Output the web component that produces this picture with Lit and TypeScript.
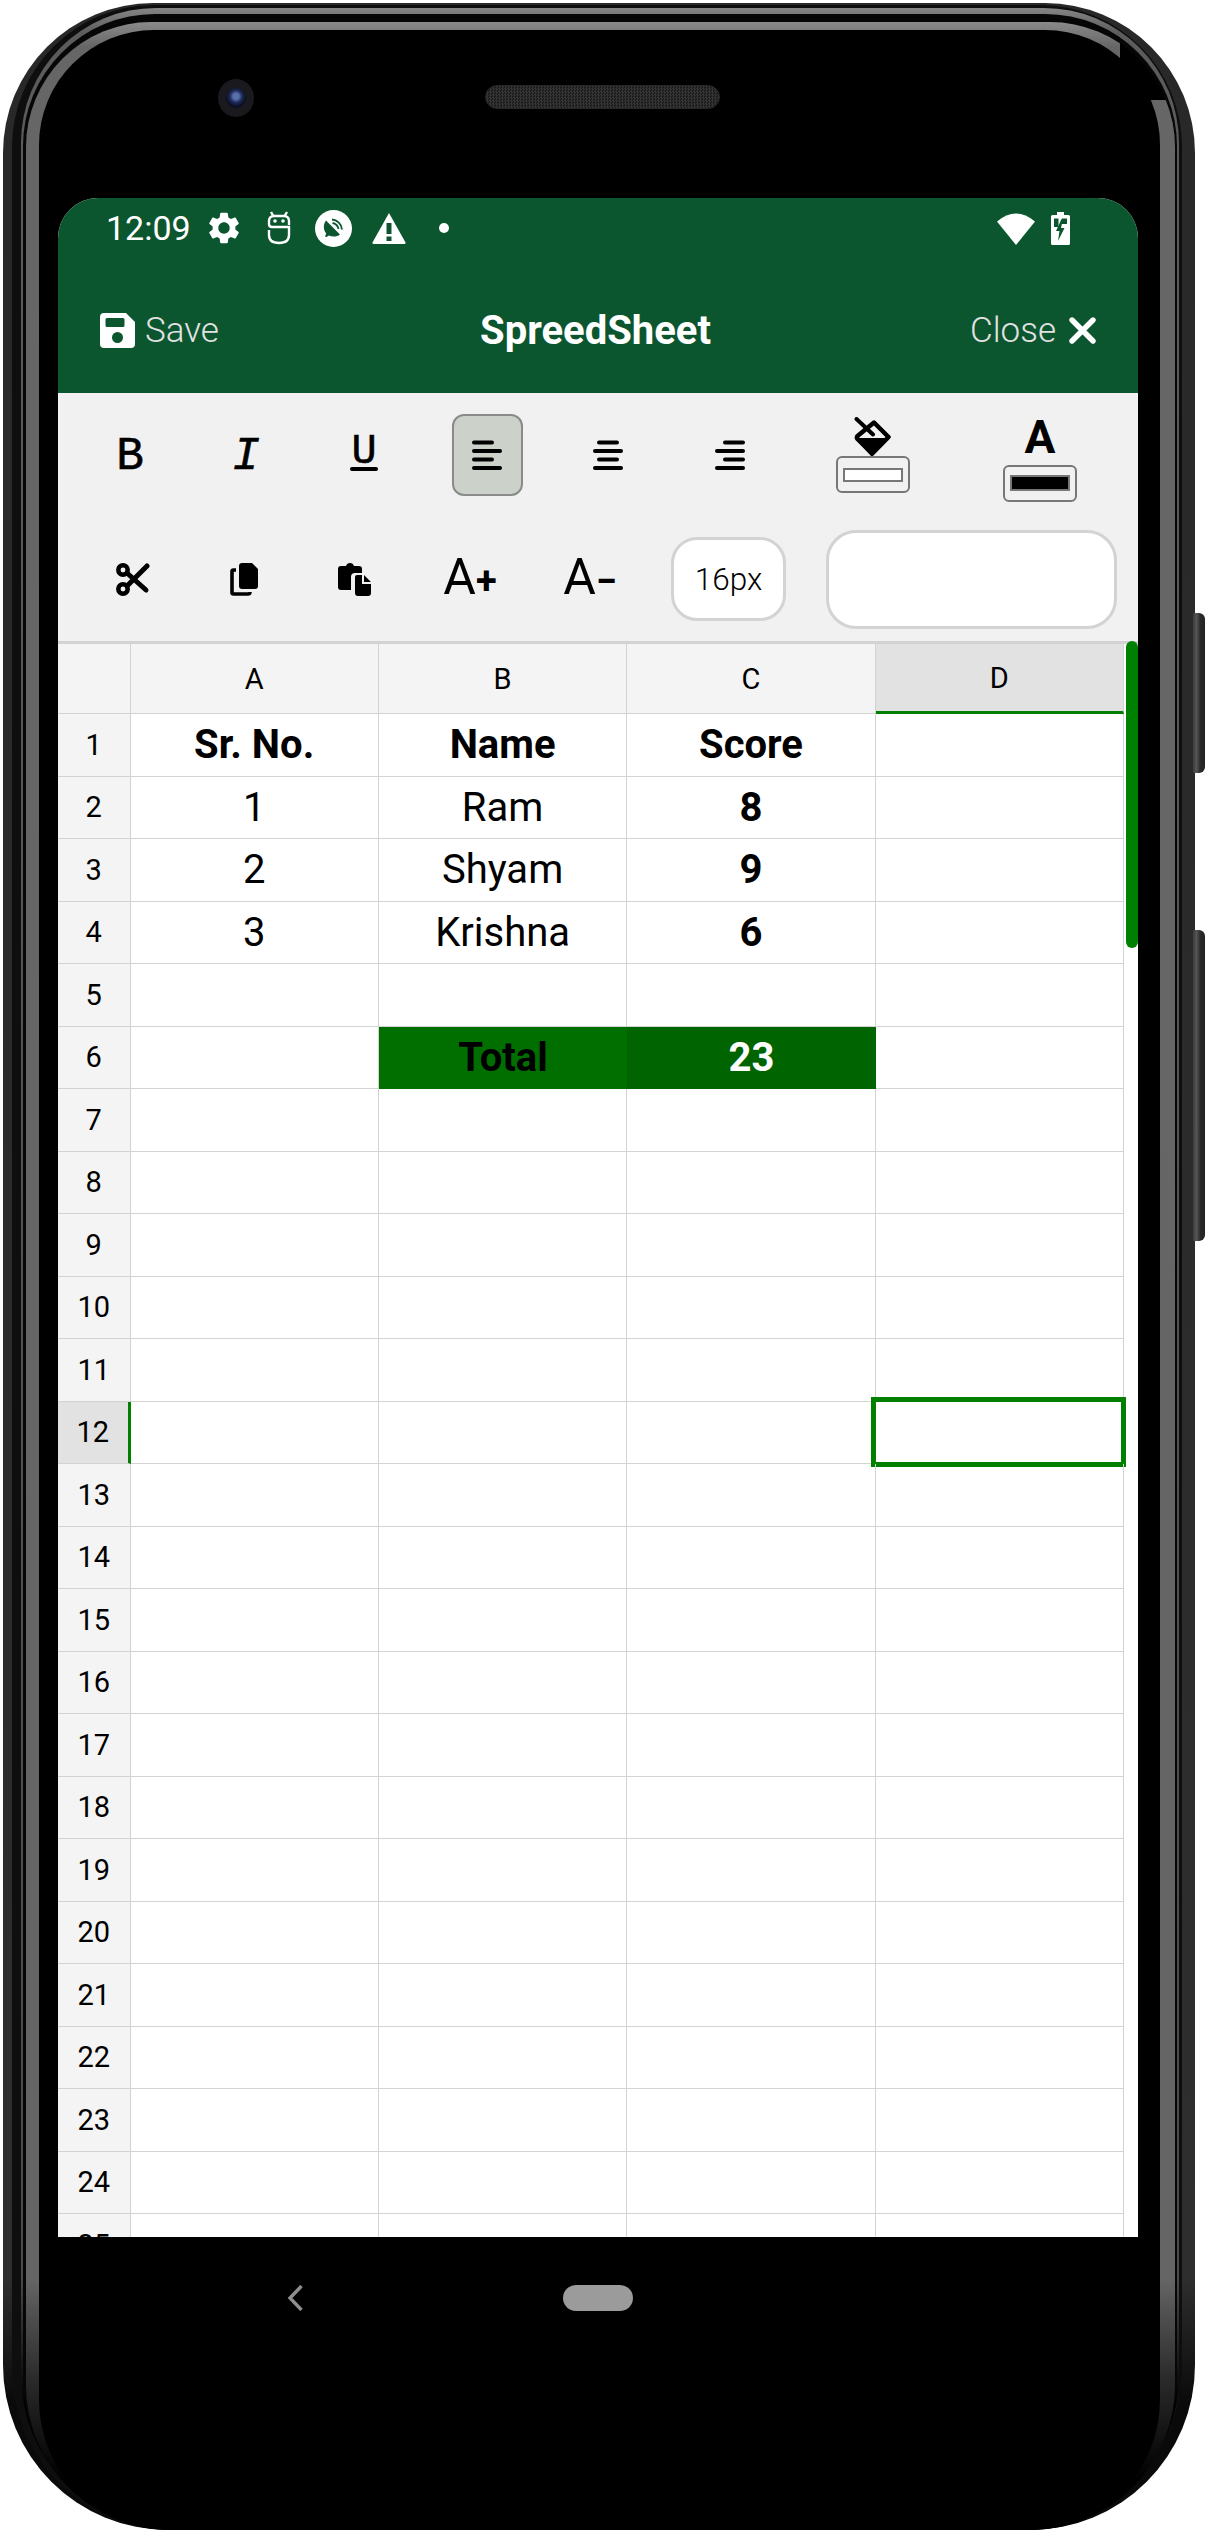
import { LitElement, html, css, svg } from "lit";
import { customElement } from "lit/decorators.js";

type Cell = { text?: string; cls?: string };

const COLS = ["A", "B", "C", "D"];

// only the rows that hold something, the rest of the sheet is blank
const DATA: Record<number, Cell[]> = {
  1: [{ text: "Sr. No.", cls: "bold" }, { text: "Name", cls: "bold" }, { text: "Score", cls: "bold" }, {}],
  2: [{ text: "1" }, { text: "Ram" }, { text: "8", cls: "bold" }, {}],
  3: [{ text: "2" }, { text: "Shyam" }, { text: "9", cls: "bold" }, {}],
  4: [{ text: "3" }, { text: "Krishna" }, { text: "6", cls: "bold" }, {}],
  6: [{}, { text: "Total", cls: "bold total-b" }, { text: "23", cls: "bold total-c" }, {}],
  12: [{}, {}, {}, { cls: "selected" }],
};

const gear = svg`<path d="M19.14 12.94c.04-.3.06-.61.06-.94 0-.32-.02-.64-.07-.94l2.03-1.58c.18-.14.23-.41.12-.61l-1.92-3.32c-.12-.22-.37-.29-.59-.22l-2.39.96c-.5-.38-1.03-.7-1.62-.94l-.36-2.54c-.04-.24-.24-.41-.48-.41h-3.84c-.24 0-.43.17-.47.41l-.36 2.54c-.59.24-1.13.57-1.62.94l-2.39-.96c-.22-.08-.47 0-.59.22L2.74 8.87c-.12.21-.08.47.12.61l2.03 1.58c-.05.3-.09.63-.09.94s.02.64.07.94l-2.03 1.58c-.18.14-.23.41-.12.61l1.92 3.32c.12.22.37.29.59.22l2.39-.96c.5.38 1.03.7 1.62.94l.36 2.54c.05.24.24.41.48.41h3.84c.24 0 .44-.17.47-.41l.36-2.54c.59-.24 1.13-.56 1.62-.94l2.39.96c.22.08.47 0 .59-.22l1.92-3.32c.12-.22.07-.47-.12-.61l-2.01-1.58zM12 15.6c-1.98 0-3.6-1.62-3.6-3.6s1.62-3.6 3.6-3.6 3.6 1.62 3.6 3.6-1.62 3.6-3.6 3.6z"/>`;

function bars(lines: [number, number][]) {
  return html`<svg class="bars" width="30" height="30" viewBox="0 0 30 30" fill="none" stroke="#000" stroke-width="4" stroke-linecap="round">
    ${lines.map((l, i) => svg`<line x1=${l[0]} x2=${l[1]} y1=${2.5 + i * 8.5} y2=${2.5 + i * 8.5} />`)}
  </svg>`;
}

@customElement("app-root")
export class AppRoot extends LitElement {
  static styles = css`
    :host {
      display: block;
      width: 1206px;
      height: 2533px;
      background: #fff;
      font-family: Roboto, "Liberation Sans", sans-serif;
      color: #000;
    }
    * { box-sizing: border-box; }

    /* phone shell, one nested ring per band of the frame */
    .device {
      position: relative;
      display: flex;
      width: 1192px;
      height: 2527px;
      margin: 3px 0 0 3px;
      padding: 2px 13px 0 9px;
      background: linear-gradient(#282828 0, #2e2e2e 90%, #0a0a0a 95%);
      border-radius: 150px 150px 165px 165px;
    }
    .ring1, .ring2, .ring3, .ring4, .bezel {
      display: flex;
      flex: 1;
      min-width: 0;
    }
    .ring1 {
      padding: 3px 3px 0 9px;
      background: #0e0e0e;
      border-radius: 142px 142px 160px 160px;
    }
    .ring2 {
      padding: 6px 2px 0 2px;
      background: linear-gradient(#858585 0, #5c5c5c 1%, #4a4a4a 90%, #000 95%);
      border-radius: 135px 135px 155px 155px;
    }
    .ring3 {
      padding: 8px 2px 0 3px;
      background: #060606;
      border-radius: 132px 132px 152px 152px;
    }
    .ring4 {
      padding: 8px 15px 0 13px;
      background:
        linear-gradient(#000, #000) right top / 55px 78px no-repeat,
        linear-gradient(#8a8a8a 0, #666 1%, #656565 90%, #2a2a2a 94%, #000 98%);
      border-radius: 125px 125px 145px 145px;
    }
    .bezel {
      flex-direction: column;
      background: #000;
      border-radius: 115px 115px 130px 130px;
    }
    .side-btn {
      position: absolute;
      left: 1190px;
      width: 12px;
      background: linear-gradient(90deg, #3c3c3c, #555 30%, #2a2a2a 60%, #222);
      border-radius: 0 6px 6px 0;
    }
    .side-btn.power { top: 610px; height: 160px; }
    .side-btn.volume { top: 927px; height: 311px; }

    .top-bezel {
      display: flex;
      align-items: flex-start;
      flex: none;
      height: 168px;
      padding: 49px 0 0 179px;
    }
    .camera {
      flex: none;
      display: flex;
      align-items: center;
      justify-content: center;
      width: 36px;
      height: 38px;
      border-radius: 50%;
      background: #1a1a1e;
    }
    .camera i {
      width: 20px;
      height: 20px;
      border-radius: 50%;
      background: radial-gradient(circle at 50% 42%, #5a6ea8 0 3px, #1f2c5c 6px, #0b0f22 10px);
    }
    .speaker {
      flex: none;
      width: 235px;
      height: 24px;
      margin: 6px 0 0 231px;
      border-radius: 12px;
      border: 1px solid #262626;
      background: repeating-conic-gradient(#343434 0 25%, #1c1c1c 0 50%) 0 0 / 3px 3px;
    }

    .screen {
      display: flex;
      flex-direction: column;
      flex: none;
      height: 2039px;
      margin: 0 22px 0 19px;
      border-radius: 40px 40px 0 0;
      overflow: hidden;
      background: #fff;
      position: relative;
    }

    .nav {
      display: flex;
      align-items: flex-start;
      flex: none;
      padding: 48px 0 0 248px;
    }
    .pill {
      width: 70px;
      height: 26px;
      margin-left: 260px;
      border-radius: 13px;
      background: #9b9b9b;
    }

    /* header */
    .appbar {
      flex: none;
      height: 195px;
      background: #0c562f;
      color: #fff;
    }
    .status {
      display: flex;
      align-items: center;
      height: 60px;
      padding: 0 0 0 48px;
    }
    .time {
      width: 85px;
      font-size: 34px;
      font-weight: 400;
      line-height: 60px;
    }
    .status svg { flex: none; fill: #fff; }
    .status .gear { margin-left: 14px; }
    .status .robot { margin-left: 23px; fill: none; }
    .status .dish { margin-left: 23px; }
    .status .warn { margin-left: 20px; }
    .status .dot {
      width: 10px;
      height: 10px;
      margin-left: 33px;
      border-radius: 50%;
      background: #fff;
    }
    .status .wifi { margin-left: auto; }
    .status .batt { margin: 0 68px 0 16px; }

    .actions {
      display: grid;
      grid-template-columns: 1fr auto 1fr;
      align-items: center;
      height: 135px;
      padding: 10px 42px 0;
    }
    .action {
      display: flex;
      align-items: center;
      gap: 10px;
      font-size: 35px;
      font-weight: 300;
      color: #e2e2e2;
    }
    .action.right { justify-content: flex-end; gap: 13px; }
    .title {
      margin-left: -5px;
      font-size: 40px;
      font-weight: 700;
      color: #fff;
    }

    /* toolbar */
    .toolbar {
      flex: none;
      height: 248px;
      padding-left: 14px;
      background: #f1f1f1;
    }
    .tools {
      display: grid;
      align-items: center;
      justify-items: center;
      height: 124px;
    }
    .tools.one { grid-template-columns: 116px 116px 120px 126px 116px 128px 158px 176px; }
    .tools.two {
      grid-template-columns: 122px 100px 120px 112px 128px 149px 335px;
    }
    .mono {
      margin-top: 3px;
      font-family: "Liberation Mono", monospace;
      font-weight: 400;
      font-size: 46px;
      line-height: 30px;
      -webkit-text-stroke: 0.6px #000;
    }
    .mono.ital { font-style: italic; }
    .mono.under {
      display: flex;
      flex-direction: column;
      align-items: center;
      margin-top: 0;
      font-size: 42px;
      line-height: 24px;
    }
    .mono.under::after {
      content: "";
      width: 28px;
      height: 4px;
      margin-top: 3px;
      background: #000;
      border-radius: 2px;
    }
    .active {
      display: flex;
      align-items: center;
      justify-content: center;
      width: 71px;
      height: 82px;
      background: #ccd1ca;
      border: 2px solid #8a8a8a;
      border-radius: 12px;
    }
    .swatch {
      display: flex;
      flex-direction: column;
      align-items: center;
    }
    .swatch.ink { margin-top: 10px; }
    .swatch .letter {
      font-size: 46px;
      font-weight: 700;
      line-height: 36px;
      height: 46px;
    }
    .swatch .box {
      display: flex;
      align-items: center;
      justify-content: center;
      width: 74px;
      height: 37px;
      border: 2px solid #777;
      border-radius: 6px;
    }
    .swatch .box i {
      width: 60px;
      height: 14px;
      border: 2px solid #777;
      background: #fff;
    }
    .swatch.ink .box i { height: 16px; background: #000; }
    .bump {
      font-size: 50px;
      font-weight: 450;
      line-height: 50px;
    }
    .bump span { font-size: 38px; font-weight: 700; }
    .size {
      display: flex;
      align-items: center;
      justify-content: center;
      width: 115px;
      height: 84px;
      background: #fff;
      border: 3px solid #d3d3d3;
      border-radius: 26px;
      font-size: 31.5px;
      font-weight: 350;
    }
    .search {
      justify-self: start;
      width: 291px;
      height: 99px;
      margin-left: 23px;
      background: #fff;
      border: 3px solid #d3d3d3;
      border-radius: 30px;
    }

    /* sheet */
    .sheet {
      display: grid;
      flex: none;
      grid-template-columns: 72.5px repeat(4, 248.4px);
      grid-template-rows: 70px;
      grid-auto-rows: 62.5px;
      border-top: 3px solid #d3d3d3;
    }
    .sheet > div {
      display: flex;
      align-items: center;
      justify-content: center;
      position: relative;
      border-right: 1px solid #d3d3d3;
      border-bottom: 1px solid #d3d3d3;
      font-size: 40px;
      white-space: nowrap;
    }
    .sheet > .head {
      background: #f4f4f4;
      font-size: 29px;
      font-weight: 400;
    }
    .sheet > .head.on-col {
      background: #e2e2e2;
      border-bottom: 3px solid #007f00;
    }
    .sheet > .head.on-row {
      background: #e2e2e2;
      border-right: 3px solid #007f00;
    }
    .sheet > .bold { font-weight: 700; }
    .sheet > .total-b { background: #006f00; border: none; }
    .sheet > .total-c { background: #006400; color: #fff; border: none; }
    .sheet > .selected::after {
      content: "";
      position: absolute;
      inset: -5px -3px -4px -5px;
      border: 5px solid #007f00;
    }
    .scrollbar {
      position: absolute;
      right: 0;
      top: 443px;
      width: 12px;
      height: 307px;
      border-radius: 6px;
      background: #008000;
    }
  `;

  render() {
    const rows = Array.from({ length: 25 }, (_, i) => i + 1);
    return html`
      <div class="device">
        <div class="side-btn power"></div>
        <div class="side-btn volume"></div>
        <div class="ring1"><div class="ring2"><div class="ring3"><div class="ring4">
          <div class="bezel">
            <div class="top-bezel">
              <div class="camera"><i></i></div>
              <div class="speaker"></div>
            </div>
            <div class="screen">
              ${this.renderAppbar()}
              ${this.renderToolbar()}
              <div class="sheet">
                <div class="head"></div>
                ${COLS.map((c) => html`<div class="head ${c === "D" ? "on-col" : ""}">${c}</div>`)}
                ${rows.map(
                  (r) => html`
                    <div class="head row ${r === 12 ? "on-row" : ""}">${r}</div>
                    ${(DATA[r] ?? [{}, {}, {}, {}]).map((cell) => html`<div class=${cell.cls ?? ""}>${cell.text ?? ""}</div>`)}
                  `
                )}
              </div>
              <div class="scrollbar"></div>
            </div>
            <div class="nav">
              <svg width="16" height="26" viewBox="0 0 16 26" fill="none" stroke="#8e8e8e" stroke-width="3.4">
                <path d="M14.5 1 3 13l11.5 12" />
              </svg>
              <div class="pill"></div>
            </div>
          </div>
        </div></div></div></div>
      </div>
    `;
  }

  renderAppbar() {
    return html`
      <div class="appbar">
        <div class="status">
          <span class="time">12:09</span>
          <svg class="gear" width="38" height="38" viewBox="0 0 24 24">${gear}</svg>
          <svg class="robot" width="26" height="34" viewBox="0 0 26 34" stroke="#fff" stroke-width="2.4">
            <path d="M5 1l2.4 4M21 1l-2.400 4" />
            <path d="M23 14v-4q0-5-5-5H8q-5 0-5 5v3q0 3 3 3h17v8q0 8-10 8T3 24v-5" />
            <circle cx="9" cy="10" r="1.8" fill="#fff" stroke="none" />
            <circle cx="17" cy="10" r="1.8" fill="#fff" stroke="none" />
          </svg>
          <svg class="dish" width="37" height="37" viewBox="0 0 37 37">
            <circle cx="18.5" cy="18.5" r="18.5" />
            <path d="M11 10.500 25 24.500c-3 2.500-8 2.500-11 1l-2.500 1.500-1.500-.5 1.200-3c-3-3.500-3.200-9-.2-13z" fill="#0c562f" />
            <path d="M17 9.500c5 .3 9.800 4.800 10 10M17.500 13c3 .3 5.800 3 6 6" fill="none" stroke="#0c562f" stroke-width="1.8" />
          </svg>
          <svg class="warn" width="34" height="31" viewBox="0 0 34 31">
            <path d="M17 0 33.500 29.500q.3 1.500-1 1.500H1.500q-1.300 0-1-1.500z" />
            <path d="M14.500 10h5v11h-5zM14.500 23.500h5V28h-5z" fill="#0c562f" />
          </svg>
          <span class="dot"></span>
          <svg class="wifi" width="38" height="33" viewBox="0 0 38 33">
            <path d="M0 9.500Q19-6.500 38 9.500L19 33z" />
          </svg>
          <svg class="batt" width="19" height="33" viewBox="0 0 19 33">
            <path d="M6 0h7v3h4.500q1.500 0 1.500 1.500v27q0 1.500-1.500 1.500h-16Q0 33 0 31.500v-27Q0 3 1.500 3H6z" />
            <path d="M3 6.500h4.500V15H3zM11 6.500h5V12h-5z" fill="#0c562f" />
            <path d="M10.500 7 5 19h3.500L7 29l6.500-13H10l2-9z" fill="#0c562f" />
          </svg>
        </div>
        <div class="actions">
          <div class="action">
            <svg width="35" height="35" viewBox="0 0 35 35" fill="#fff">
              <path fill-rule="evenodd" d="M4 0h22l9 9v22q0 4-4 4H4q-4 0-4-4V4q0-4 4-4zM7 5q-1.500 0-1.500 1.500v6Q5.500 14 7 14h16q1.500 0 1.500-1.500v-6Q24.500 5 23 5zM17.500 19a5.500 5.500 0 1 0 0 11 5.500 5.500 0 0 0 0-11z" />
            </svg>
            <span>Save</span>
          </div>
          <div class="title">SpreedSheet</div>
          <div class="action right">
            <span>Close</span>
            <svg width="27" height="27" viewBox="0 0 27 27" fill="none" stroke="#fff" stroke-width="5.4" stroke-linecap="round">
              <path d="M3 3l21 21M24 3 3 24" />
            </svg>
          </div>
        </div>
      </div>
    `;
  }

  renderToolbar() {
    return html`
      <div class="toolbar">
        <div class="tools one">
          <span class="mono">B</span>
          <span class="mono ital">I</span>
          <span class="mono under">U</span>
          <div class="active">${bars([[2, 20], [2, 28], [2, 20], [2, 28]])}</div>
          ${bars([[6, 24], [2, 28], [6, 24], [2, 28]])}
          ${bars([[10, 28], [2, 28], [10, 28], [2, 28]])}
          <div class="swatch">
            <svg width="40" height="39" viewBox="0 0 40 39">
              <path d="M21 5.500 35.500 20 19 36.500 4.500 22a2 2 0 0 1 0-3z" fill="none" stroke="#000" stroke-width="4.5" stroke-linejoin="round" />
              <path d="M4 22h31L19 38.500z" fill="#000" stroke="#000" stroke-width="2" stroke-linejoin="round" />
              <path d="M3.500 2 20 17.500" fill="none" stroke="#000" stroke-width="4" stroke-linecap="round" />
            </svg>
            <div class="box"><i></i></div>
          </div>
          <div class="swatch ink">
            <span class="letter">A</span>
            <div class="box"><i></i></div>
          </div>
        </div>
        <div class="tools two">
          <svg width="34" height="33" viewBox="0 0 34 33" fill="none" stroke="#000" stroke-width="4.5">
            <circle cx="7" cy="7" r="4.7" />
            <circle cx="7" cy="26" r="4.7" />
            <path d="M11 10 30 27" stroke-width="5" stroke-linecap="round" />
            <path d="M11 23 31 3" stroke-width="5" stroke-linecap="round" />
          </svg>
          <svg width="28" height="33" viewBox="0 0 28 33">
            <path d="M12 0h10l6 6v17q0 3-3 3H12q-3 0-3-3V3q0-3 3-3z" />
            <path d="M6 7H3.500Q2 7 2 8.500v21Q2 31 3.500 31H18q2 0 2-2" fill="none" stroke="#000" stroke-width="3.6" />
          </svg>
          <svg width="33" height="33" viewBox="0 0 33 33">
            <path d="M3 3h5q1-3 4-3t4 3h5q3 0 3 3v4h-7q-4 0-4 4v13H3q-3 0-3-3V6q0-3 3-3z" />
            <path d="M17 14q0-2 2-2h5v9h9v9q0 3-3 3H20q-3 0-3-3zM26 12l7 7h-7z" />
          </svg>
          <span class="bump">A<span>+</span></span>
          <span class="bump">A<span>−</span></span>
          <div class="size">16px</div>
          <div class="search"></div>
        </div>
      </div>
    `;
  }
}
